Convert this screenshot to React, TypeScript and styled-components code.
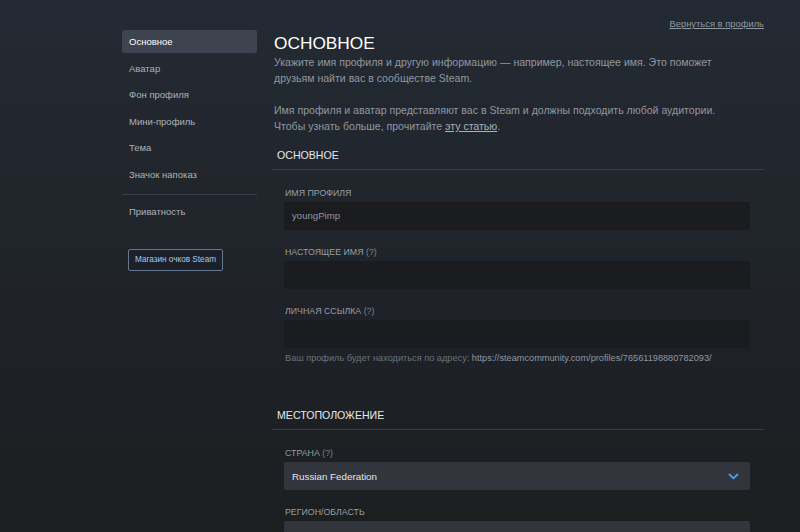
import React from "react";
import styled, { createGlobalStyle } from "styled-components";

const GlobalStyle = createGlobalStyle`
  html, body {
    margin: 0;
    padding: 0;
    height: 100%;
    overflow: hidden;
  }
  body {
    background: linear-gradient(
      to bottom,
      #242a33 0%,
      #21262d 35%,
      #1e2127 65%,
      #1b1f20 100%
    );
    font-family: "Liberation Sans", Arial, sans-serif;
  }
`;

const Page = styled.div`
  display: flex;
  align-items: flex-start;
  padding: 14px 0 0 122px;
  height: 532px;
  box-sizing: border-box;
`;

const Sidebar = styled.nav`
  width: 135px;
  margin-top: 16px;
  display: flex;
  flex-direction: column;
`;

const NavItem = styled.div<{ $active?: boolean }>`
  height: 23px;
  line-height: 23px;
  padding-left: 7px;
  margin-bottom: 3.5px;
  font-size: 9.5px;
  border-radius: 2px;
  color: ${(p) => (p.$active ? "#ffffff" : "#acb2b8")};
  background: ${(p) => (p.$active ? "#3d4450" : "transparent")};
`;

const NavDivider = styled.div`
  height: 1px;
  background: #3a3f47;
  margin: 5px 0 5px;
`;

const ShopButton = styled.div`
  align-self: flex-start;
  margin: 22px 0 0 6px;
  padding: 0 6px;
  height: 20px;
  line-height: 20px;
  font-size: 8.2px;
  color: #a6c8ee;
  background: #1c2028;
  border: 1px solid #667890;
  border-radius: 2px;
`;

const Main = styled.main`
  width: 492px;
  margin-left: 15px;
`;

const BackRow = styled.div`
  text-align: right;
  line-height: 16px;
  height: 16px;
`;

const BackLink = styled.a`
  font-size: 9.4px;
  color: #8f98a0;
  text-decoration: underline;
`;

const Title = styled.h1`
  margin: 2px 0 0 2px;
  font-size: 17.3px;
  line-height: 22px;
  font-weight: 400;
  color: #ffffff;
  text-transform: uppercase;
`;

const Lead = styled.p`
  max-width: 452px;
  margin: 0 0 16px 2px;
  font-size: 10.55px;
  line-height: 16px;
  color: #8f98a0;
  &:last-of-type {
    margin-bottom: 0;
  }
  a {
    color: #acb2b8;
    text-decoration: underline;
  }
`;

const Section = styled.section<{ $gap: number }>`
  margin-top: ${(p) => p.$gap}px;
`;

const SectionHead = styled.div`
  padding: 0 5px 5px;
  font-size: 10.6px;
  line-height: 18px;
  color: #e6e8ea;
  text-transform: uppercase;
  border-bottom: 1px solid #3a3f47;
`;

const Fields = styled.div`
  padding: 16px 14px 0 12px;
  display: flex;
  flex-direction: column;
  gap: 15px;
`;

const Field = styled.div`
  display: flex;
  flex-direction: column;
`;

const Label = styled.label`
  padding-left: 1px;
  margin-bottom: 2px;
  font-size: 8.8px;
  line-height: 14px;
  color: #969ea5;
  text-transform: uppercase;
  span {
    text-transform: none;
    color: #7d858d;
  }
`;

const Input = styled.div`
  height: 28px;
  line-height: 28px;
  padding: 0 8px;
  background: #1a1c20;
  border-radius: 2px;
  font-size: 9.6px;
  color: #8f98a0;
`;

const Select = styled.div`
  height: 28px;
  padding: 0 8px;
  display: flex;
  align-items: center;
  justify-content: space-between;
  background: #32353c;
  border-radius: 2px;
  font-size: 9.8px;
  color: #e2e4e6;
`;

const Hint = styled.div`
  margin-top: 3px;
  padding-left: 1px;
  font-size: 9.2px;
  line-height: 14px;
  color: #6b737b;
  span {
    color: #8f98a0;
  }
`;

const Chevron = () => (
  <svg width="11" height="7" viewBox="0 0 11 7" style={{ marginRight: 3 }}>
    <path
      d="M1.5 1.5 L5.5 5.3 L9.5 1.5"
      fill="none"
      stroke="#4a9ad6"
      strokeWidth="2"
      strokeLinecap="round"
      strokeLinejoin="round"
    />
  </svg>
);

const navItems = [
  "Основное",
  "Аватар",
  "Фон профиля",
  "Мини-профиль",
  "Тема",
  "Значок напоказ",
];

export default function App() {
  return (
    <>
      <GlobalStyle />
      <Page>
        <Sidebar>
          {navItems.map((item, i) => (
            <NavItem key={item} $active={i === 0}>
              {item}
            </NavItem>
          ))}
          <NavDivider />
          <NavItem>Приватность</NavItem>
          <ShopButton>Магазин очков Steam</ShopButton>
        </Sidebar>

        <Main>
          <BackRow>
            <BackLink>Вернуться в профиль</BackLink>
          </BackRow>
          <Title>Основное</Title>
          <Lead>
            Укажите имя профиля и другую информацию — например, настоящее имя.
            Это поможет друзьям найти вас в сообществе Steam.
          </Lead>
          <Lead>
            Имя профиля и аватар представляют вас в Steam и должны подходить
            любой аудитории. Чтобы узнать больше, прочитайте{" "}
            <a>эту статью</a>.
          </Lead>

          <Section $gap={12}>
            <SectionHead>Основное</SectionHead>
            <Fields>
              <Field>
                <Label>Имя профиля</Label>
                <Input>youngPimp</Input>
              </Field>
              <Field>
                <Label>
                  Настоящее имя <span>(?)</span>
                </Label>
                <Input />
              </Field>
              <Field>
                <Label>
                  Личная ссылка <span>(?)</span>
                </Label>
                <Input />
                <Hint>
                  Ваш профиль будет находиться по адресу:{" "}
                  <span>https://steamcommunity.com/profiles/76561198880782093/</span>
                </Hint>
              </Field>
            </Fields>
          </Section>

          <Section $gap={41}>
            <SectionHead>Местоположение</SectionHead>
            <Fields>
              <Field>
                <Label>
                  Страна <span>(?)</span>
                </Label>
                <Select>
                  Russian Federation
                  <Chevron />
                </Select>
              </Field>
              <Field>
                <Label>Регион/Область</Label>
                <Select>Тульская область</Select>
              </Field>
            </Fields>
          </Section>
        </Main>
      </Page>
    </>
  );
}
